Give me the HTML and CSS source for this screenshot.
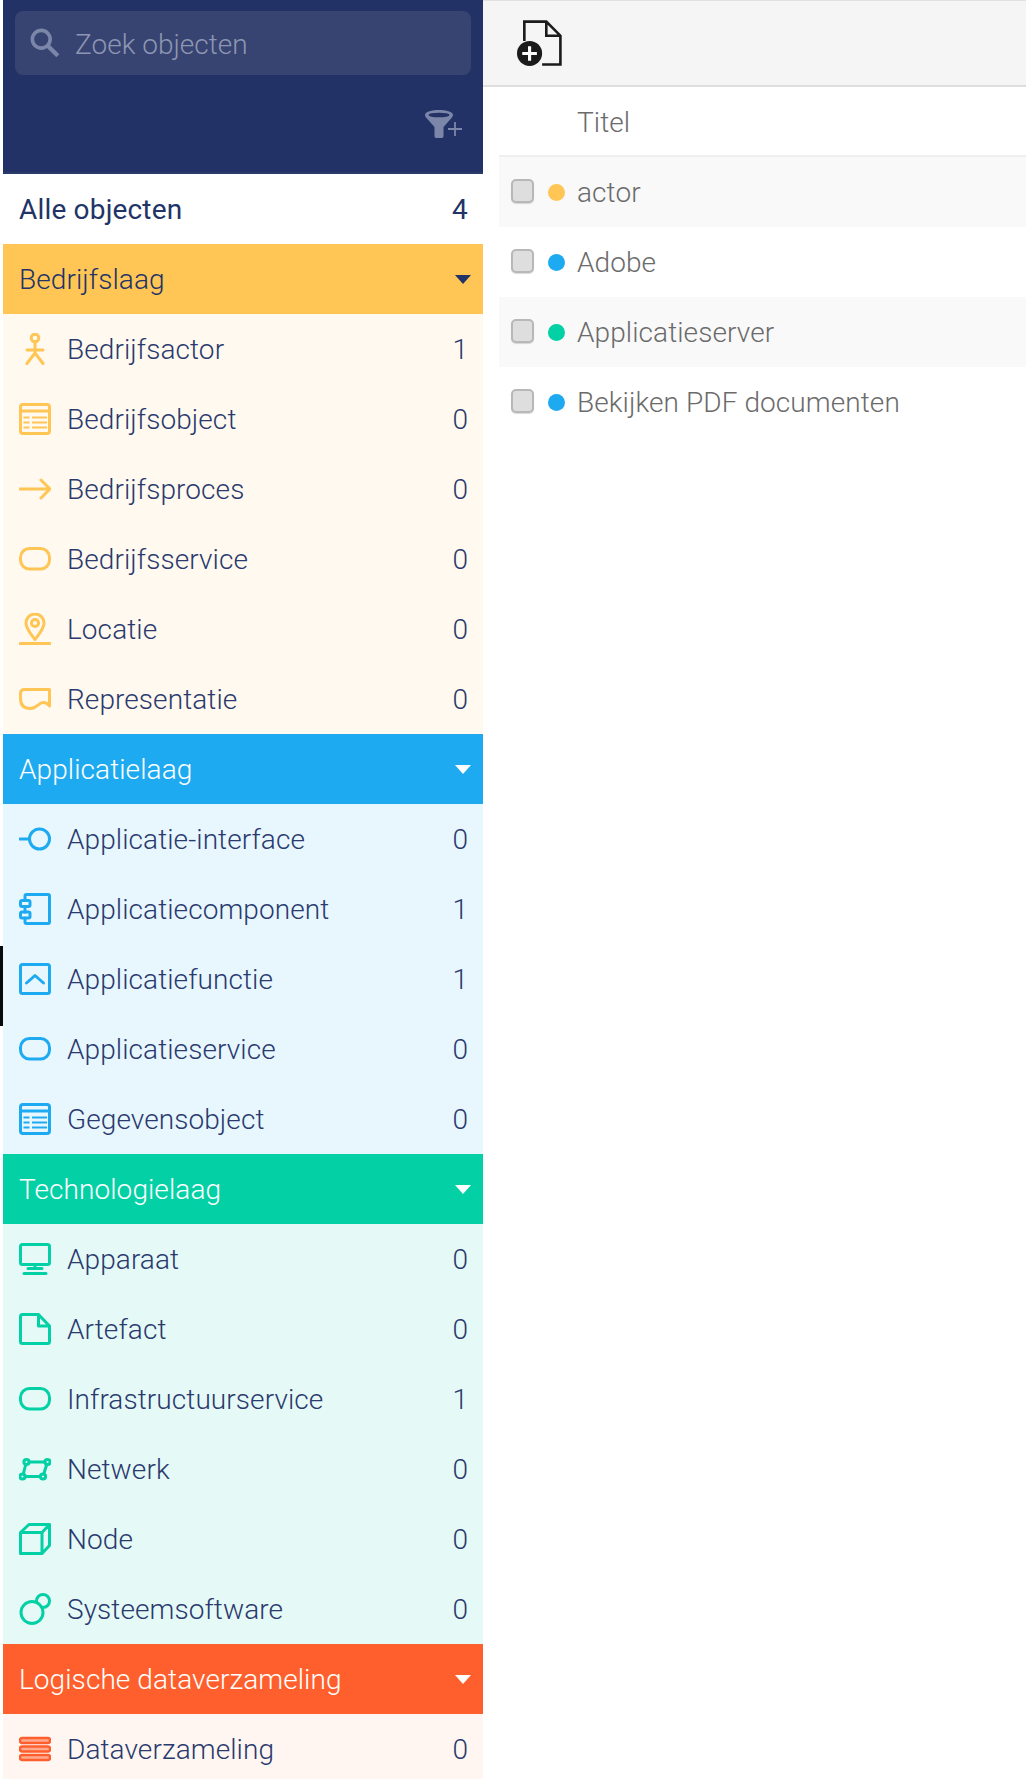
FILE: index.html
```html
<!DOCTYPE html>
<html lang="nl">
<head>
<meta charset="utf-8">
<title>Objecten</title>
<link rel="stylesheet" href="styles.css">
</head>
<body>
<div class="app">
  <span class="active-mark"></span>
  <aside class="sidebar">
    <div class="side-head">
      <div class="search">
        <svg class="search-icon" viewBox="0 0 28 28"><circle cx="10.500" cy="10.500" r="8.300" fill="none" stroke="currentColor" stroke-width="3.400"/><path d="M16.500 16.500 26 26" fill="none" stroke="currentColor" stroke-width="4"/></svg>
        <span class="search-text">Zoek objecten</span>
      </div>
      <div class="filter-row">
        <svg class="filter-icon" viewBox="0 0 37 28"><path d="M0 5C0 1.500 7 0 14 0s14 1.500 14 5c0 1-.7 2-1.500 3l-8 9v9c0 1.500-1 2-2 2h-5c-1 0-2-.5-2-2V17L1.500 8C.7 7 0 6 0 5Z" fill="currentColor"/><ellipse cx="14" cy="5" rx="10.500" ry="2.300" fill="#233266"/><path d="M30 12v14M23 19h14" fill="none" stroke="currentColor" stroke-width="1.800"/></svg>
      </div>
    </div>
    <div class="row row-all"><span>Alle objecten</span><span>4</span></div>

    <div class="group yellow">
      <div class="group-head dark"><span>Bedrijfslaag</span><i class="caret"></i></div>
      <div class="row"><svg class="ico" viewBox="0 0 32 32"><circle cx="16" cy="5" r="3.800"/><path d="M16 9v11M8 17h16M8 30.500l8-10.500 8 10.500"/></svg><span class="label">Bedrijfsactor</span><span>1</span></div>
      <div class="row"><svg class="ico" viewBox="0 0 32 32"><rect x="1.500" y="1.500" width="29" height="29" rx="2.500"/><path d="M1.500 8h29"/><path class="thin" d="M4.500 14.500h6M13 14.500h15M4.500 19.500h6M13 19.500h15M4.500 24.500h6M13 24.500h15"/></svg><span class="label">Bedrijfsobject</span><span>0</span></div>
      <div class="row"><svg class="ico" viewBox="0 0 32 32"><path d="M1 16h29.500M22 7l9 9-9 9"/></svg><span class="label">Bedrijfsproces</span><span>0</span></div>
      <div class="row"><svg class="ico" viewBox="0 0 32 32"><rect x="1.500" y="5.500" width="29" height="20.500" rx="9"/></svg><span class="label">Bedrijfsservice</span><span>0</span></div>
      <div class="row"><svg class="ico" viewBox="0 0 32 32"><path d="M16 26.500C12 21 7 16 7 10a9 9 0 0 1 18 0C25 16 20 21 16 26.500Z"/><circle cx="16" cy="10" r="3.600"/><path d="M1 30.500h30"/></svg><span class="label">Locatie</span><span>0</span></div>
      <div class="row"><svg class="ico" viewBox="0 0 32 32"><path d="M30.500 23V6.500H5.500Q1.500 6.500 1.500 10.500v5q0 10 10 10c6 0 8-6 13-6q3.500 0 6 3.500Z"/></svg><span class="label">Representatie</span><span>0</span></div>
    </div>

    <div class="group blue">
      <div class="group-head"><span>Applicatielaag</span><i class="caret"></i></div>
      <div class="row"><svg class="ico" viewBox="0 0 32 32"><circle cx="20.500" cy="16" r="10"/><path d="M1 16h9"/></svg><span class="label">Applicatie-interface</span><span>0</span></div>
      <div class="row"><svg class="ico" viewBox="0 0 32 32"><path d="M6 7V3q0-1.500 1.500-1.500h21.500q1.500 0 1.500 1.500v26q0 1.500-1.500 1.500H7.500Q6 30.500 6 29v-4M6 14v5"/><rect x="1.500" y="7.500" width="9.500" height="6" rx="1.500"/><rect x="1.500" y="19" width="9.500" height="6" rx="1.500"/></svg><span class="label">Applicatiecomponent</span><span>1</span></div>
      <div class="row"><svg class="ico" viewBox="0 0 32 32"><rect x="1.500" y="1.500" width="29" height="29" rx="2"/><path d="m7.500 20 8.500-7.500 8.500 7.500"/></svg><span class="label">Applicatiefunctie</span><span>1</span></div>
      <div class="row"><svg class="ico" viewBox="0 0 32 32"><rect x="1.500" y="5.500" width="29" height="20.500" rx="9"/></svg><span class="label">Applicatieservice</span><span>0</span></div>
      <div class="row"><svg class="ico" viewBox="0 0 32 32"><rect x="1.500" y="1.500" width="29" height="29" rx="2.500"/><path d="M1.500 8h29"/><path class="thin" d="M4.500 14.500h6M13 14.500h15M4.500 19.500h6M13 19.500h15M4.500 24.500h6M13 24.500h15"/></svg><span class="label">Gegevensobject</span><span>0</span></div>
    </div>

    <div class="group green">
      <div class="group-head"><span>Technologielaag</span><i class="caret"></i></div>
      <div class="row"><svg class="ico" viewBox="0 0 32 32"><rect x="1.500" y="1.500" width="29" height="20" rx="2"/><path d="M16 22v3M9 25.500h14M5 30.500h22"/></svg><span class="label">Apparaat</span><span>0</span></div>
      <div class="row"><svg class="ico" viewBox="0 0 32 32"><path d="M19.500 1.500H3.500q-2 0-2 2v25q0 2 2 2h25q2 0 2-2V13L19.500 1.500V13h11"/></svg><span class="label">Artefact</span><span>0</span></div>
      <div class="row"><svg class="ico" viewBox="0 0 32 32"><rect x="1.500" y="5.500" width="29" height="20.500" rx="9"/></svg><span class="label">Infrastructuurservice</span><span>1</span></div>
      <div class="row"><svg class="ico" viewBox="0 0 32 32"><circle cx="7.500" cy="9" r="2.600"/><circle cx="28.500" cy="9" r="2.600"/><circle cx="24" cy="23.500" r="2.600"/><circle cx="3.500" cy="23.500" r="2.600"/><path d="M10.100 9h15.800M27.700 11.500 24.800 21M21.400 23.500H6.100M4.300 21 6.700 11.500"/></svg><span class="label">Netwerk</span><span>0</span></div>
      <div class="row"><svg class="ico" viewBox="0 0 32 32"><path d="M1.500 9.500h21.500v21H1.500ZM1.500 9.500 10 1.500h20.500v21l-7.500 8M23 9.500l7.500-8"/></svg><span class="label">Node</span><span>0</span></div>
      <div class="row"><svg class="ico" viewBox="0 0 32 32"><circle cx="24" cy="8" r="6.500"/><circle class="solid" cx="13" cy="19.500" r="11"/></svg><span class="label">Systeemsoftware</span><span>0</span></div>
    </div>

    <div class="group orange">
      <div class="group-head"><span>Logische dataverzameling</span><i class="caret"></i></div>
      <div class="row"><svg class="ico bars" viewBox="0 0 32 32"><rect x="1" y="5" width="30" height="5" rx="2"/><rect x="1" y="13.500" width="30" height="5" rx="2"/><rect x="1" y="22" width="30" height="5" rx="2"/></svg><span class="label">Dataverzameling</span><span>0</span></div>
    </div>
  </aside>

  <main class="main">
    <div class="toolbar">
      <svg class="new-icon" viewBox="0 0 43 44"><path d="M7 20V1.500h21L41.500 15v27.500H24M28 1.500V15h13.500" fill="none" stroke="#1b1b1b" stroke-width="2.500"/><circle cx="12" cy="32" r="12" fill="#1b1b1b"/><path d="M12 25v14M5 32h14" stroke="#fff" stroke-width="3"/></svg>
    </div>
    <div class="table">
      <div class="thead">Titel</div>
      <div class="trow"><span class="check"></span><span class="dot dot-yellow"></span><span>actor</span></div>
      <div class="trow"><span class="check"></span><span class="dot dot-blue"></span><span>Adobe</span></div>
      <div class="trow"><span class="check"></span><span class="dot dot-green"></span><span>Applicatieserver</span></div>
      <div class="trow"><span class="check"></span><span class="dot dot-blue"></span><span>Bekijken PDF documenten</span></div>
    </div>
  </main>
</div>
</body>
</html>
```
FILE: styles.css
```css
* { box-sizing: border-box; }
html, body { margin: 0; height: 100%; }
body {
  background: #fff;
  font-family: Roboto, "Liberation Sans", sans-serif;
  font-weight: 300;
  font-size: 28px;
  letter-spacing: .08px;
  overflow: hidden;
}
.app {
  position: relative;
  display: flex;
  height: 1779px;
  overflow: hidden;
}
.active-mark {
  position: absolute;
  left: 0;
  top: 946px;
  width: 3px;
  height: 80px;
  background: #07090f;
}
.sidebar {
  width: 480px;
  margin-left: 3px;
  flex: none;
}
.side-head {
  height: 174px;
  background: #233266;
  padding: 11px 12px 0;
  border-bottom: 2px solid #2a3a6d;
}
.search {
  height: 64px;
  border-radius: 8px;
  background: #374370;
  display: flex;
  align-items: center;
  padding-left: 15px;
  color: #8d96b3;
}
.search-icon { width: 30px; height: 30px; color: #7b86a8; flex: none; }
.search-text { margin-left: 15px; padding-top: 2px; letter-spacing: 0; }
.filter-row {
  display: flex;
  justify-content: flex-end;
  padding: 35px 9px 0 0;
}
.filter-icon { width: 37px; height: 28px; color: #7b86a8; display: block; }
.row, .group-head {
  height: 70px;
  display: flex;
  align-items: center;
  justify-content: space-between;
  padding: 0 15px 0 16px;
  color: #2a3a6e;
}
.row-all { font-weight: 400; background: #fff; color: #223367; letter-spacing: .18px; }
.group-head { color: #fff; }
.group-head.dark { color: #223367; }
.caret {
  width: 0;
  height: 0;
  border-left: 8px solid transparent;
  border-right: 8px solid transparent;
  border-top: 9px solid currentColor;
  margin-right: -3px;
}
.ico {
  width: 32px;
  height: 32px;
  flex: none;
  fill: none;
  stroke: currentColor;
  stroke-width: 3;
  stroke-linecap: round;
  stroke-linejoin: round;
}
.ico .thin { stroke-width: 2.200; stroke-linecap: butt; }
.ico .solid { fill: var(--tint); }
.ico.bars { stroke-width: 2.400; }
.ico.bars rect { fill: #ffa98f; }
.group .row .ico { color: var(--accent); }
.group .row .label { flex: 1; margin-left: 16px; }
.group .row { background: var(--tint); }
.group .group-head { background: var(--accent); }
.yellow { --accent: #ffc555; --tint: #fff9ef; }
.blue { --accent: #1eaaf1; --tint: #e8f6fe; }
.green { --accent: #03d1a5; --tint: #e5f9f6; }
.orange { --accent: #ff5f2c; --tint: #fff6f2; }
.main { flex: 1; min-width: 0; }
.toolbar {
  height: 87px;
  background: #f5f5f5;
  border-top: 1px solid #e0e0e0;
  border-bottom: 2px solid #dedede;
  padding: 19px 0 0 34px;
}
.new-icon { width: 45px; height: 46px; display: block; }
.table { margin-left: 16px; color: #6b6b6b; }
.thead {
  height: 70px;
  line-height: 72px;
  padding-left: 78px;
  border-bottom: 2px solid #efefef;
}
.trow {
  height: 70px;
  display: flex;
  align-items: center;
  padding-left: 12px;
}
.trow:nth-child(even) { background: #f9f9f9; }
.check {
  width: 23px;
  height: 24px;
  margin-bottom: 2px;
  border-radius: 5px;
  background: #dedede;
  border: 2px solid #b8b8b8;
  box-shadow: 0 1px 1px rgba(0,0,0,.15);
  flex: none;
}
.dot {
  width: 17px;
  height: 17px;
  border-radius: 50%;
  margin: 0 12px 0 14px;
  flex: none;
}
.dot-yellow { background: #ffc555; }
.dot-blue { background: #1eaaf1; }
.dot-green { background: #03d1a5; }
```
